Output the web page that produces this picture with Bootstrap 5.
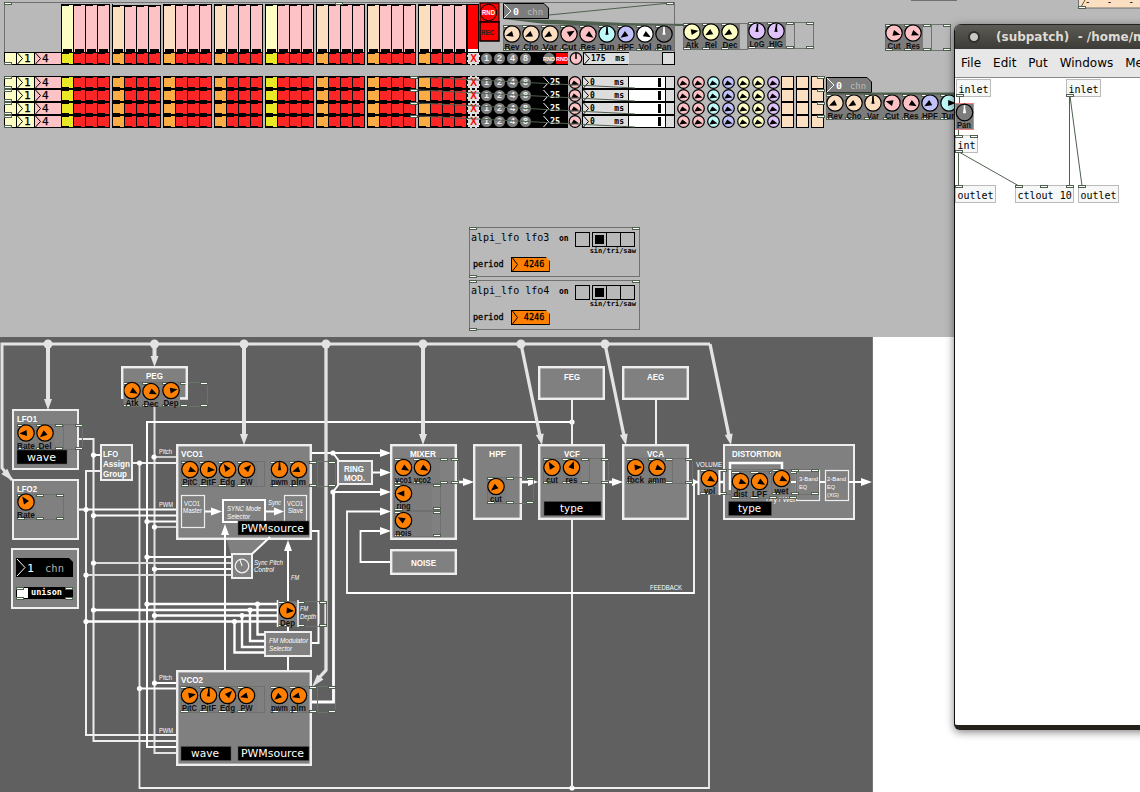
<!DOCTYPE html>
<html lang="en">
<head>
<meta charset="utf-8">
<title>Synth patch</title>
<link href="https://cdn.jsdelivr.net/npm/bootstrap@5.3.0/dist/css/bootstrap.min.css" rel="stylesheet">
<style>
body{margin:0;background:#fff;color:#000;font-family:"DejaVu Sans",sans-serif}
.desk{width:1140px;height:792px;background:#fff}
.upper{height:337px;background:#b9b9b9;padding-top:2px}
.layer{left:0;top:0;pointer-events:none}
.mono{font-family:"DejaVu Sans Mono",monospace}
.seqtop{width:671px;height:62px;margin:0 0 0 4px;border:solid #707070;border-width:1px 1px 0 1px;line-height:1}
.bars{height:49px;padding:1px 0 0 56px;gap:2px}
#first{margin-left:-1px}
.bank{width:49px;border-left:1px solid #000}
.bank.low{padding-top:1px}
.fader{width:12px;height:100%;border:solid #000;border-width:1px 1px 0 0;background:#fcc2c5;position:relative}
.fader::before{content:"";position:absolute;left:0;top:0;width:7px;height:1px;background:#000}
.fader::after{content:"";position:absolute;left:1px;bottom:0;width:9px;height:3px;background:#000}
.fader.fy{background:#fdfec4}.fader.ft{background:#fcdfc0}
.pads{height:13px;line-height:1;width:822px;flex:none}
.pads .bank{margin-right:2px;height:13px}
.pullback{margin-left:-2px}
.pad{width:12px;height:13px;border:solid #000;border-width:1px 1px 1px 0;background:#fd2626;position:relative;flex:none}
.pad::before,.pad::after{content:"";position:absolute;left:0;width:7px;height:1px;background:#000}
.pad::before{top:0}.pad::after{bottom:0}
.pad.py{background:#e8e827}.pad.po{background:#fcac44}
.nb{height:13px;border:1px solid #000;border-width:1px 0 1px 1px;background:#fdfec4;font-size:11px;position:relative;flex:none;overflow:hidden;-webkit-text-stroke:.25px #000}
.nb svg{flex:none}
.w12{width:12px}.w18{width:18px}.nb.w27{width:27px;background:#fcc2c5}
.xb{width:13px;height:13px;background:#ddd;color:#f00;border:1px dashed #000;font:bold 10px/11px "Liberation Sans",sans-serif;text-align:center;flex:none}
.rb{width:13px;height:13px;background:#000;flex:none;padding:1px}
.rb span{display:block;width:11px;height:11px;border-radius:50%;background:#7c7c7c;color:#eee;font:bold 9px/11px "Liberation Sans",sans-serif;text-align:center}
.blk{width:36px;height:13px;background:#000;color:#fff;font-size:8.5px;font-weight:bold;flex:none}
.blk span:first-child{margin-left:11px}
.kn{width:14px;height:13px;flex:none}
.kn svg,.kk svg{display:block}
.kn.gap1{margin-left:1px}
.nb.ms{width:46px;background:#ddd;font-size:8px;font-weight:bold;-webkit-text-stroke:0}
.sl{width:38px;height:13px;background:#fff;border:1px solid #000;flex:none}
.sl i{display:block;width:3px;height:9px;background:#000;margin:1px 0 0 29px}
.tail{width:9px;height:13px;background:#ddd;border:solid #000;border-width:1px 1px 1px 0;flex:none}
.kk{width:15px;height:13px;flex:none}
.knobs{margin-left:1px}
.tans{width:15px;height:13px;flex:none;padding-right:2px}
.tans i{display:block;height:13px;width:13px;background:#fcdfc0;border:1px solid #000}
.rows{margin:12px 0 0 4px}
.lfos{margin:99px 0 0 469px;width:171px}
.lfo.card{height:50px;margin-bottom:3px;border:1px solid #707070;background:none;border-radius:0;line-height:1}
.lfo .t{font-size:10px;width:89px;padding:5px 0 0 1px}
.lfo .s{font-size:8px;font-weight:bold;width:16px;padding-top:7px}
.box{width:15px;height:15px;border:1px solid #000;margin-top:4px}
.box i{display:block;width:9px;height:9px;margin:2px;background:#000}
.rad{margin-left:2px;height:15px}
.rad .box+.box{margin-left:-1px}
.sub{font-size:7px;font-weight:bold;text-align:right;padding-right:3px;margin-top:1px;height:4px;line-height:7px}
.per{font-size:8.5px;padding:5px 0 0 3px;gap:7px;-webkit-text-stroke:.3px #000}
.onum{width:39px;height:15px;background:#ff8000;border:1px solid #000;font-size:8.5px;clip-path:polygon(0 0,35px 0,100% 4px,100% 100%,0 100%)}
.win{left:954px;top:24px;width:230px;height:706px;border-left:1px solid #111;border-bottom:5px solid #24211a;border-radius:7px 0 0 6px;background:#fff;box-shadow:0 2px 9px rgba(0,0,0,.5);overflow:hidden}
.bar{height:25px;background:linear-gradient(#5c5b55,#3c3b37);color:#dfdbd2;font-weight:bold;font-size:12px;white-space:pre;border-top:1px solid #222;padding-left:13px}
.orb{width:12px;height:12px;border-radius:50%;background:radial-gradient(#c9c9c5 0 3.5px,#2f2e2b 4.5px);margin-right:16px}
.menu{height:29px;background:#e7e7e7;border-bottom:1px solid #8a8a8a;font-size:12px;padding-left:6px;gap:12px}
svg text{white-space:pre}
</style>
<script src="https://cdn.jsdelivr.net/npm/bootstrap@5.3.0/dist/js/bootstrap.bundle.min.js"></script>
</head>
<body>
<main class="desk position-relative overflow-hidden">
  <section class="upper overflow-hidden">
    <div class="seqtop">
      <div class="bars d-flex" id="bars"></div>
      <div id="first"></div>
    </div>
    <div class="rows" id="rows"></div>
    <div class="lfos mono" id="lfos"></div>
  </section>
  <svg class="layer position-absolute" id="patch" width="1140" height="792" viewBox="0 0 1140 792"></svg>
  <section class="win position-absolute">
    <header class="bar d-flex align-items-center"><span class="orb"></span><span>(subpatch)  - /home/m</span></header>
    <nav class="menu d-flex align-items-center"><span>File</span><span>Edit</span><span>Put</span><span>Windows</span><span>Media</span></nav>
    <svg id="sub" class="d-block" width="229" height="640" viewBox="955 78 229 640"></svg>
  </section>
</main>
<script>
const $=id=>document.getElementById(id);
const P='#fcc2c5',C='#bff8f8',L='#c2c2fa',Y='#fdfec4',V='#dfc2fa',T='#fcdfc0',O='#ff8000',G='#50604f';
const chev=(c,h=11)=>`<svg width="7" height="${h}" viewBox="0 0 7 ${h}"><path d="M0.5 0L5.5 ${h/2}L0.5 ${h}" fill="none" stroke="${c}"/></svg>`;
const kinds=[1,0,0,0,1,0,0,0];

function dial(x,y,r,fill,a,ink='#000'){
  const up=Math.abs(a)<10, b=up?1.6:3;
  return `<circle cx="${x}" cy="${y}" r="${r}" fill="${fill}" stroke="#000" stroke-width="1.2"/><polygon transform="translate(${x} ${y}) rotate(${a})" points="0,${-r+1.6} ${b},.8 -${b},.8" fill="${ink}"/>${up?`<path transform="translate(${x} ${y}) rotate(${a})" d="M0 ${-r+1}V0" stroke="${ink}" stroke-width="1.6"/>`:''}`;
}
const mini=(c,a=-125,w=14)=>{const x=w/2;return `<svg width="${w}" height="13"><circle cx="${x}" cy="6.5" r="5.8" fill="${c}" stroke="#000" stroke-width="1.2"/>${a===0?`<path d="M${x} 1V7" stroke="#000" stroke-width="1.5"/>`:`<polygon points="${x-4.2},9.6 ${x-1.2},4.6 ${x+4},8.6" fill="#000"/>`}</svg>`};

/* sequencer */
$('bars').innerHTML=kinds.map((k,i)=>`<div class="bank d-flex ${i==1?'low':''}"><div class="fader ${k?'fy':'ft'}"></div>${'<div class="fader"></div>'.repeat(3)}</div>`).join('');
const banks=kinds.map(k=>`<div class="bank d-flex flex-shrink-0"><div class="pad ${k?'py':'po'}"></div>${'<div class="pad"></div>'.repeat(3)}</div>`).join('');
const head=`<div class="nb w12"></div><div class="nb w18 d-flex mono align-items-center">${chev('#000')}<span>1</span></div><div class="nb w27 d-flex mono align-items-center">${chev('#000')}<span>4</span></div>`;
const nums='<div class="pullback"></div><div class="xb">X</div>'+[1,2,4,8].map(n=>`<div class="rb"><span>${n}</span></div>`).join('');
const ms=n=>`<div class="nb ms mono d-flex align-items-center">${chev('#000')}<span>${n}</span><span class="ms-auto pe-1">ms</span></div>`;
$('first').innerHTML=`<div class="pads d-flex">${head}${banks}${nums}<div class="blk"></div><div class="kn gap1">${mini(P,0)}</div>${ms(175)}</div>`;
$('rows').innerHTML=(`<div class="pads d-flex">${head}${banks}${nums}<div class="blk mono d-flex align-items-center"><span>${chev('#fff')}</span><span>25</span></div><div class="kn">${mini(P)}</div>${ms(0)}<div class="sl"><i></i></div><div class="tail"></div><div class="knobs d-flex">${[P,P,C,L,Y,Y,V].map(c=>`<div class="kk">${mini(c,-125,15)}</div>`).join('')}</div><div class="tans"><i></i></div><div class="tans"><i></i></div><div class="tans"><i></i></div></div>`).repeat(4);

/* LFO panels */
$('lfos').innerHTML=[3,4].map(n=>`<div class="card lfo"><div class="d-flex"><span class="t">alpi_lfo lfo${n}</span><span class="s">on</span><div class="box"></div><div class="rad d-flex"><div class="box"></div><div class="box"></div><div class="box"></div></div></div><div class="sub">sin/tri/saw</div><div class="per d-flex align-items-center"><span>period</span><span class="onum d-flex align-items-center">${chev('#000',13)}<span>&thinsp;4246</span></span></div></div>`).join('');
document.querySelectorAll('.rad .box:first-child').forEach(b=>b.innerHTML='<i></i>');

/* patch canvas */
let s='';
const rect=(x,y,w,h,f,st='none',sw=1)=>s+=`<rect x="${x}" y="${y}" width="${w}" height="${h}" fill="${f}" stroke="${st}" stroke-width="${sw}"/>`;
const wire=(d,w=2,c='#fff')=>s+=`<path d="${d}" fill="none" stroke="${c}" stroke-width="${w}"/>`;
const dot=(x,y,r=2.6,c='#fff')=>s+=`<circle cx="${x}" cy="${y}" r="${r}" fill="${c}"/>`;
const txt=(x,y,t,sz,w,o={})=>s+=`<text x="${x}" y="${y}" font-size="${sz}" ${w?`textLength="${w}" lengthAdjust="spacingAndGlyphs"`:''} font-family="${o.f||'Liberation Sans, sans-serif'}" fill="${o.c||'#fff'}" font-weight="${o.b||'normal'}" font-style="${o.i?'italic':'normal'}">${t}</text>`;
const node=(x1,y1,x2,y2,b=3)=>rect(x1+b/2,y1+b/2,x2-x1-b,y2-y1-b,'#808080','#eee',b);
const tip=(x,y,a,c='#fff',l=11,w=4)=>s+=`<polygon transform="translate(${x} ${y}) rotate(${a})" points="0,0 ${-l},${-w} ${-l},${w}" fill="${c}"/>`;
const inlet=(x,y)=>rect(x+.5,y+.5,7,2,'#fff',G,1);
const MONO='DejaVu Sans Mono, monospace',SANS='DejaVu Sans, sans-serif';
/* a row of dials with captions, background and connection points */
function strip(x,y,w,h,bgw,list){
  rect(x,y,bgw,h,'#7c7c7c');rect(x+.5,y+.5,w-1,h-1,'none','#707070');
  list.forEach(k=>{const[cx,cy,a,l,c,lw]=k;inlet(cx-9,y);inlet(cx-9,y+h-3);s+=dial(cx,cy,8.2,c||O,a,c=='#7c7c7c'?'#fff':'#000');
    txt(cx-(lw||15)/2,cy+15.5,l,8.5,lw||15,{c:'#111',b:'bold'})});
  if(w-bgw>14){inlet(x+w-8,y);inlet(x+w-8,y+h-3);inlet(x+bgw,y);inlet(x+bgw,y+h-3)}
}
function label(x,y,w,t,tx,tw){rect(x,y,w,14,'#000','#555',.5);txt(tx,y+10.5,t,11,tw,{f:SANS})}
function chn(x,y,bg,n){s+=`<path d="M${x+.5} ${y+.5}H${x+41}L${x+45.5} ${y+5}V${y+15.5}H${x+.5}Z" fill="${bg}" stroke="#000"/><path d="M${x+1} ${y+1}L${x+8} ${y+8}L${x+1} ${y+15}" fill="none" stroke="#fff"/>`;txt(x+10,y+11.5,n,9,6,{f:MONO,b:'bold'});txt(x+24,y+11.5,'chn',9,16,{f:MONO,c:'#bbb'})}

/* top controls */
wire('M674.5 3V52',1,'#707070');wire('M549 15L670 3',1,G);
s+=`<polygon points="504,19 560,20 625,23 690,24 690,26 600,26 545,24" fill="${G}"/>`;
chn(503,3,'#7c7c7c','0');
rect(480,3,19,19,'#f00','#000');s+='<circle cx="488.5" cy="12.5" r="8.2" fill="#f00" stroke="#000"/>';txt(482,15,'RND',7,13,{b:'bold'});
rect(480,22,19,19,'#f00','#000',1.5);txt(481,35,'REC',8,13,{c:'#222',b:'bold'});
rect(467.5,4.5,11,48,'#f00','#000');rect(468,49,10,3,'#fff');
strip(503,25,172,26,172,[[512,34,-105,'Rev',T],[531,34,-115,'Cho',T],[550,34,-120,'Var',T],[569,34,60,'Cut',P],[588,34,125,'Res',P],[607,34,0,'Tun',C],[626,34,-125,'HPF',L,16],[645,34,120,'Vol','#fff',13],[664,34,0,'Pan','#7c7c7c']]);
strip(683,23,65,27,57,[[692,32,80,'Atk',Y,13],[711,32,-120,'Rel',Y,12],[730,32,-120,'Dec',Y,15]]);
strip(748,22,66,27,38,[[757,31,5,'LoG',V,15],[776,31,5,'HIG',V,14]]);
wire('M794.5 23V48',1,'#707070');
inlet(4,2);inlet(4,62);inlet(335,2);inlet(666,2);
s+='<circle cx="549" cy="58.5" r="5.7" fill="#7c7c7c"/>';txt(543,61,'RND',6,12,{b:'bold'});
rect(556,53,12,11,'#f00');txt(556,61,'RND',6,12,{b:'bold'});
wire('M628 64.5H674',1,'#707070');rect(662.5,52.5,12,12,'#ddd','#000');
for(let i=0;i<4;i++){const y=76+13*i;inlet(4,y);inlet(4,y+10);inlet(410,y);wire(`M418 ${y+1}L635 ${y+12}`,1,G);inlet(817,y)}
strip(885,24,66,27,38,[[894,33,105,'Cut',P,13],[913,33,110,'Res',P,14]]);wire('M931.5 25V50M911 .5H957',1,'#707070');
chn(826,77,'#7c7c7c','0');
strip(826,94,135,26,135,[[835,103,-115,'Rev',T],[854,103,-120,'Cho',T],[873,103,0,'Var',T,12],[892,103,-75,'Cut',P,14],[911,103,120,'Res',P],[930,103,-120,'HPF',L,16],[949,103,90,'Tun',C,15]]);
wire('M826 93.5H955',2,G);
rect(1078.5,-3,70,11,T,'#707070');inlet(1078,6);wire('M1081 7L1085 0',1,G);txt(1085,5,'-   -   -',10,49,{f:MONO,c:'#000'});
inlet(469,227);inlet(632,227);inlet(469,275);inlet(469,280);inlet(632,280);inlet(469,328);

/* synth block diagram */
rect(0,337,873,455,'#606060');wire('M872.5 337V792',1,'#777');
const M='#e3e3e3';
wire('M154.5 405V753H177',2,M);wire('M79 439H93.5V741H177M100 471H86V735H177',2,'#eee');
wire('M133 463H177M139.5 463V788H709V495',1.8,'#eee');
wire('M572 422H147V747H177');
wire('M154 457H177',2,'#ccc');wire('M93 455H101M79 509.5H177M93 515.5H177M147 521.5H177');wire('M154 527H177',2,'#ccc');
wire('M147 557H232M154 569H232');wire('M93 563H232M86 575H232',2,'#ddd');
wire('M147 604H277M93 610H277M154 615.5H277M86 621.5H277M257.5 604V634.5H265M250 610V641H265M242 615.5V647H265M234.5 621.5V652.5H265',2.4);
wire('M154 683H177M139 688.5H177');
[[139.5,463],[93.5,455],[154,457],[86,509.5],[93.5,515.5],[147,521.5],[154.5,527],[147,557],[93.5,563],[154.5,569],[86,575],[147,604],[93.5,610],[154.5,615.5],[86,621.5],[257.5,604],[250,610],[242,615.5],[234.5,621.5],[154.5,683],[139.5,688.5],[572,422],[572,788],[333,453],[333,492]].forEach(p=>dot(...p));
wire('M572 400V444M572 520V788M656 400V444',2,'#eee');
wire('M312 643H318.5V531H312M288 670V545',2);
wire('M312 453H385M333 453L339 461M339 484L333 492M333 492H385');wire('M333.5 492V702H312',2.8);
wire('M373 472.5H385M385 531H360.5V562H390M385 511.5H347V593H694V480',1.8);
wire('M457 482H470M522 482H535M605 482H618M689 482H698M720 482H727',2.5);
s+='<polygon points="227,540 272,536 252,555 231,555" fill="#808080"/>';
/* modulation bus */
wire('M12 480L2 468V344H710',3,M);
wire('M48 344V400M154.5 344V358M244 344V435M423 344V435',4,M);
wire('M521 344L540 436M605 344L624 436M710 344L729 436M326 344V670L318 679',3.3,M);
[48,154.5,244,326,423,521,605].forEach(x=>dot(x,344,4.5,M));
tip(48,410,90,M);tip(154.5,367,90,M);tip(244,445,90,M);tip(423,445,90,M);tip(542,445,78,M);tip(626,445,78,M);tip(731,445,78,M);tip(13,481,48,M,13);tip(312,687,130,M,13);

[[12,409,79,470],[12,479,79,540],[11,548,79,609],[100,444,133,481],[176,444,312,540],[176,670,312,766],[337,460,373,485],[390,444,457,540],[390,549,457,575],[473,444,522,520],[538,366,605,400],[538,444,605,520],[622,366,689,400],[622,444,689,520],[723,444,855,520],[231,553,253,579],[264,631,312,657],[121,366,188,400]].forEach(b=>node(...b,[100,337,231,264,11,723,12].includes(b[0])?2:2.4));
[453,472.5,492,511.5,531].forEach(y=>tip(391,y,0));
tip(474,482,0);tip(538,482,0,'#fff',10);tip(623,482,0);tip(698,482,0,'#fff',6);
const H={b:'bold'};
txt(17,422,'LFO1',8.5,20,H);txt(17,492,'LFO2',8.5,20,H);txt(146,379,'PEG',8.5,17,H);
txt(103,457,'LFO',8.5,15,H);txt(103,467,'Assign',8.5,27,H);txt(103,476.5,'Group',8.5,24,H);
txt(181,457,'VCO1',8.5,22,H);txt(181,683,'VCO2',8.5,22,H);
txt(344,471.5,'RING',8.5,20,H);txt(344,481,'MOD.',8.5,21,H);txt(410,457,'MIXER',8.5,26,H);txt(411,566,'NOISE',8.5,25,H);txt(489,457,'HPF',8.5,17,H);
txt(564,379.5,'FEG',8.5,16,H);txt(564,457,'VCF',8.5,16,H);txt(647,379.5,'AEG',8.5,17,H);txt(647,457,'VCA',8.5,17,H);txt(732,457,'DISTORTION',8.5,49,H);
txt(159,454,'Pitch',7,13);txt(159,506.5,'PWM',7,14);txt(159,680,'Pitch',7,13);txt(159,732.5,'PWM',7,14);
txt(696,467,'VOLUME',7,26);txt(650,590,'FEEDBACK',7,32);
txt(254,565,'Sync Pitch',7,29,{i:1});txt(254,572,'Control',7,20,{i:1});txt(291,580,'FM',7,8,{i:1});
txt(269,643,'FM Modulator',7,39,{i:1});txt(269,650.5,'Selector',7,23,{i:1});
/* VCO1 inner blocks */
rect(181.5,495.5,23,32,'#808080','#eee',1.2);txt(184,505.5,'VCO1',6.5,16);txt(183,513,'Master',6.5,19);
rect(284.5,495.5,22,32,'#808080','#eee',1.2);txt(287,505.5,'VCO1',6.5,16);txt(288,513,'Slave',6.5,15);
rect(223,500,42,22,'#808080','#fff',2);txt(227,511,'SYNC Mode',6.5,34,{i:1});txt(227,518.5,'Selector',6.5,23,{i:1});txt(268,505,'Sync',6.5,13,{i:1});
wire('M205 511.5H214M265 511.5H274');tip(222,511.5,0);tip(284,511.5,0,'#fff',10);
wire('M225 670V535');tip(225,524,-90);tip(288,540,-90);
wire('M252 554L270 537');
s+='<circle cx="242" cy="566" r="6.8" fill="none" stroke="#eee" stroke-width="1.3"/>';wire('M242 566L240 560',1,'#fff');

/* dial groups */
strip(17,424,66,26,38,[[26,433,-95,'Rate',O,18],[45,433,-130,'Del',O,13]]);wire('M63.5 425V450',1,'#707070');
strip(17,494,47,26,19,[[26,502,-35,'Rate',O,18]]);
rect(121,399,68,7,'#606060');strip(123,382,85,25,57,[[132,390.5,120,'Atk',O,13],[151,391.5,115,'Dec',O,15],[171,390.5,80,'Dep',O,15]]);wire('M122.3 382V399M186.8 382V398.5H180',2.4,'#eee');
strip(181,461,84,26,76,[[190,469.5,110,'PitC'],[208.5,469.5,95,'PitF'],[227.5,469.5,-35,'Edg'],[246.5,469.5,45,'PW',O,12]]);
strip(271,461,65,26,38,[[279.5,469.5,0,'pwm',O,17],[298.5,469.5,-110,'plm',O,15]]);wire('M317.5 461V487',1,'#707070');
strip(181,686,84,27,76,[[189.5,695.5,80,'PitC'],[208.5,695.5,3,'PitF'],[227.5,695.5,45,'Edg'],[246.5,695.5,-105,'PW',O,12]]);
strip(271,686,65,27,38,[[279.5,695.5,-130,'pwm',O,17],[298.5,695.5,-105,'plm',O,15]]);wire('M317.5 686V713',1,'#707070');
strip(394,458,65,26,46,[[403.5,467.5,120,'vco1',O,17],[422.5,467.5,120,'vco2',O,17]]);
strip(394,484,47,27,38,[[403.5,493.5,-90,'ring',O,14]]);strip(394,511,47,26,38,[[403.5,520.5,-60,'nois',O,16]]);
inlet(433,484);inlet(433,507);inlet(433,511);inlet(433,534);
strip(487,477,47,27,19,[[496,486.5,-130,'cut',O,12]]);
strip(543,458,66,26,38,[[552,467.5,-30,'cut',O,12],[571.5,467.5,20,'res',O,12]]);wire('M589.5 458V484',1,'#707070');
strip(627,458,66,26,38,[[635.5,467.5,85,'fbck',O,17],[657,467.5,110,'amm',O,18]]);wire('M672.5 458V484',1,'#707070');
strip(278,601,49,26,19,[[287.5,610.5,95,'Dep']]);wire('M277.5 600V627M298 600V627',1.5);
txt(300,611,'FM',7,8,{i:1});txt(300,619,'Depth',7,16,{i:1});
/* output stage */
wire('M730 490V463H782V473',2.5);wire('M780 482H797M820 482H825M849 482H862');tip(872,482,0);
rect(796.5,470.5,23,30,'#808080','#eee',1.2);rect(825.5,470.5,23,30,'#808080','#eee',1.2);
txt(766,502,'Dry / Wet',6.5,29);
strip(699,469,120,26,20,[[709.5,478.5,120,'vol',O,11]]);wire('M698.5 470V495M719.5 470V495',2);
strip(731,471,66,28,38,[[740.5,481.5,110,'dist',O,14],[759.5,481.5,120,'LPF',O,15]]);
strip(771,469,48,26,20,[[781.5,478.5,115,'wet',O,14]]);
txt(799,481,'3-Band',6,19);txt(799,489,'EQ',6,8);txt(827,481,'2-Band',6,19);txt(827,489,'EQ',6,8);txt(827,497,'(XG)',6,12);

label(17,450,50,'wave',27,29);label(544,501.5,57,'type',560,23);label(728.5,501.5,43,'type',738,23);
label(238,521,71,'PWMsource',241,63);label(181,746.5,50,'wave',191,28);label(238,746.5,71,'PWMsource',241,63);
s+='<path d="M16 558H69L73 562V577H16Z" fill="#000"/><path d="M17 559L25 567.5L17 576" fill="none" stroke="#fff"/>';
txt(27,572,'1',11,7,{f:MONO});txt(45,572,'chn',11,19,{f:MONO,c:'#aaa'});
rect(16,587,57,12,'#000');rect(17,588,11,10,'#fff');inlet(16,587);inlet(65,587);inlet(16,597);inlet(65,597);txt(31,595,'unison',8.5,31,{f:MONO,b:'bold'});
$('patch').innerHTML=s;

/* sub-patch window */
s='';
const obj=(x,y,w,t)=>{rect(x+.5,y+.5,w-1,17,'#f6f8f8','#bbb');txt(x+2.5,y+14,t,10.5,t.length*6.02,{f:MONO,c:'#000'})};
wire('M959.5 95V106M958.5 130V136M958.5 152V187M959 152L1019 186M1069.5 96V187M1070 96L1082 186',1,G);
obj(956,79,35,'inlet');obj(1066,79,35,'inlet');obj(955,135,23,'int');obj(955,185,41,'outlet');obj(1015,185,59,'ctlout 10');obj(1078,185,41,'outlet');
rect(955.5,103.5,18,26,'#7c7c7c','#f08080');s+=dial(964.5,112.5,8.3,'#7c7c7c',0,'#fff');txt(957,128,'Pan',8.5,14,{c:'#111',b:'bold'});
[[956,94],[1066,94],[955,135],[970,135],[955,150],[955,185],[1015,185],[1040,185],[1066,185],[1078,185]].forEach(p=>inlet(...p));
$('sub').innerHTML=s;
</script>
</body>
</html>
